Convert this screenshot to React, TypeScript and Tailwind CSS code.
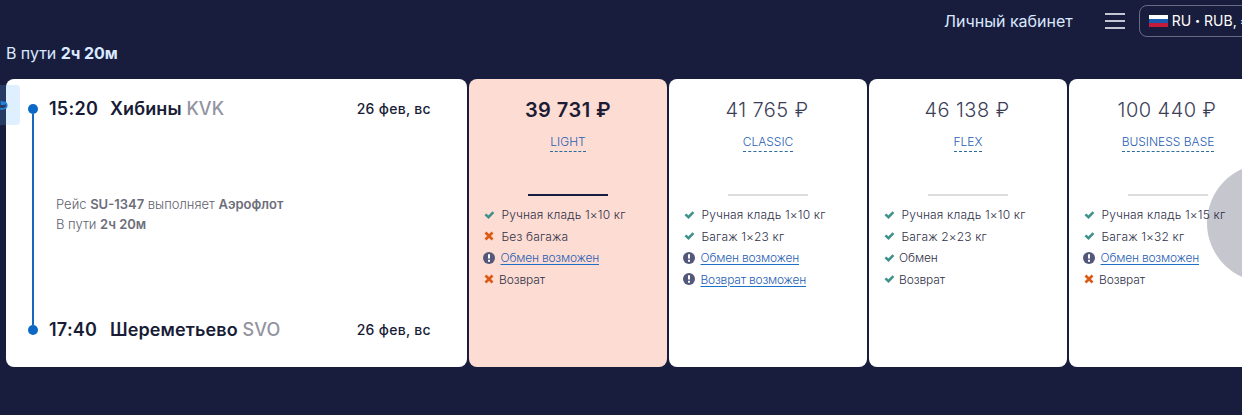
import React from "react";

type Mark = "yes" | "no" | "info";
type Feature = { mark: Mark; text: string; tight?: boolean };
type Fare = { price: string; name: string; selected?: boolean; features: Feature[] };

const fares: Fare[] = [
  {
    price: "39 731 ₽",
    name: "LIGHT",
    selected: true,
    features: [
      { mark: "yes", text: "Ручная кладь 1×10 кг" },
      { mark: "no", text: "Без багажа" },
      { mark: "info", text: "Обмен возможен" },
      { mark: "no", text: "Возврат", tight: true },
    ],
  },
  {
    price: "41 765 ₽",
    name: "CLASSIC",
    features: [
      { mark: "yes", text: "Ручная кладь 1×10 кг" },
      { mark: "yes", text: "Багаж 1×23 кг" },
      { mark: "info", text: "Обмен возможен" },
      { mark: "info", text: "Возврат возможен" },
    ],
  },
  {
    price: "46 138 ₽",
    name: "FLEX",
    features: [
      { mark: "yes", text: "Ручная кладь 1×10 кг" },
      { mark: "yes", text: "Багаж 2×23 кг" },
      { mark: "yes", text: "Обмен", tight: true },
      { mark: "yes", text: "Возврат", tight: true },
    ],
  },
  {
    price: "100 440 ₽",
    name: "BUSINESS BASE",
    features: [
      { mark: "yes", text: "Ручная кладь 1×15 кг" },
      { mark: "yes", text: "Багаж 1×32 кг" },
      { mark: "info", text: "Обмен возможен" },
      { mark: "no", text: "Возврат", tight: true },
    ],
  },
];

function MarkIcon({ mark }: { mark: Mark }) {
  if (mark === "info") {
    return (
      <svg className="h-3 w-3 shrink-0" viewBox="0 0 12 12">
        <circle cx="6" cy="6" r="6" fill="#53587a" />
        <path d="M6 2.2v4.4" stroke="#fff" strokeWidth="2" />
        <path d="M6 7.8v1.9" stroke="#fff" strokeWidth="2" />
      </svg>
    );
  }
  return (
    <svg className="h-3 w-3 shrink-0" viewBox="0 0 12 12" fill="none">
      {mark === "yes" ? (
        <path d="M2.4 5.3 5.5 8.2 10.4 3.2" stroke="#3d918a" strokeWidth="2.5" />
      ) : (
        <path d="M2.5 2.5 9.5 9.5M9.5 2.5 2.5 9.5" stroke="#dc5a14" strokeWidth="2.7" />
      )}
    </svg>
  );
}

function FareCard({ fare }: { fare: Fare }) {
  return (
    <section
      className={`flex h-72 w-[198px] shrink-0 flex-col items-center rounded-lg ${
        fare.selected ? "bg-[#fddcd3]" : "bg-white"
      }`}
    >
      <div
        className={`mt-[19px] h-6 whitespace-nowrap text-xl leading-6 tracking-[0.45px] ${
          fare.selected ? "font-semibold text-[#1b1b33]" : "-translate-x-px font-light text-[#3c3e58]"
        }`}
      >
        {fare.price}
      </div>
      <a className="mt-3 h-[18px] border-b border-dashed border-[#286d9c] text-xs font-light leading-4 text-[#2860b4]">
        {fare.name}
      </a>
      <div className={`mt-[42px] h-0.5 w-20 ${fare.selected ? "bg-[#181d40]" : "bg-[#dcdcde]"}`} />
      <ul className="mt-2 grid w-full grid-rows-[21px_22px_21px_22px] pl-3.5 text-xs font-light text-[#2f3148]">
        {fare.features.map((f) => (
          <li key={f.text} className="flex items-center whitespace-nowrap leading-[21px]">
            <MarkIcon mark={f.mark} />
            <span
              className={
                f.mark === "info"
                  ? "ml-[5.5px] tracking-[-0.2px] text-[#2860b4] underline decoration-[#1c70c8] decoration-1 underline-offset-2"
                  : f.tight
                    ? "ml-1 tracking-[-0.1px]"
                    : "ml-[6.5px] tracking-[0.16px]"
              }
            >
              {f.text}
            </span>
          </li>
        ))}
      </ul>
    </section>
  );
}

function Stop({ time, city, code }: { time: string; city: string; code: string }) {
  return (
    <div className="flex h-6 items-center">
      <span className="w-[61px] text-lg font-semibold leading-6 tracking-[0.25px]">{time}</span>
      <span className="flex-1 text-lg font-semibold leading-6 tracking-[0.12px]">
        {city} <span className="font-medium text-[#93939f]">{code}</span>
      </span>
      <span className="text-sm font-medium tracking-[0.3px]">26 фев, вс</span>
    </div>
  );
}

function FlightCard() {
  return (
    <section className="relative flex h-72 w-[461px] shrink-0 rounded-lg bg-white pt-[18px] pr-9 pb-[25px] pl-[22px] text-[#181c36]">
      <div className="absolute -left-1.5 top-1.5 flex h-10 w-5 items-center overflow-hidden rounded-r bg-[#58adff]/20">
        <svg className="h-3 w-2" viewBox="0 0 8 12" fill="none">
          <path d="M0 9.6C4 10.4 7 9 6.8 6.2 6.6 3.6 4 2.6 2 4M1.5 1.8v3.4h3.2" stroke="#2684d8" strokeWidth="1.7" />
        </svg>
      </div>
      <div className="flex w-2.5 flex-col items-center py-[7px]">
        <i className="h-2.5 w-2.5 rounded-full bg-[#0b68c5]" />
        <i className="w-0.5 flex-1 bg-[#1769bb]" />
        <i className="h-2.5 w-2.5 rounded-full bg-[#0b68c5]" />
      </div>
      <div className="ml-[11px] flex flex-1 flex-col justify-between">
        <Stop time="15:20" city="Хибины" code="KVK" />
        <div className="-mt-[11px] pl-[7px] text-[13px] font-light leading-5 text-[#60616f]">
          <p>
            Рейс <b className="font-semibold text-[#6d6e7b]">SU-1347</b> выполняет{" "}
            <b className="font-semibold text-[#6d6e7b]">Аэрофлот</b>
          </p>
          <p>
            В пути <b className="font-semibold text-[#6d6e7b]">2ч 20м</b>
          </p>
        </div>
        <Stop time="17:40" city="Шереметьево" code="SVO" />
      </div>
    </section>
  );
}

export default function App() {
  return (
    <main className="relative h-[415px] w-full overflow-hidden bg-[#191d3d] font-['Inter','Liberation_Sans',sans-serif]">
      <header className="flex h-[42px] items-center pl-[944px]">
        <a className="w-[129px] whitespace-nowrap text-base leading-6 text-[#d9e9ff]">Личный кабинет</a>
        <div className="ml-8 flex w-5 shrink-0 flex-col gap-[5px]">
          <i className="h-0.5 bg-[#c3c6d2]" />
          <i className="h-0.5 bg-[#c3c6d2]" />
          <i className="h-0.5 bg-[#c3c6d2]" />
        </div>
        <button className="ml-3.5 flex h-8 w-[130px] shrink-0 items-center whitespace-nowrap rounded-lg border border-[#686b82] pl-[9px] text-sm text-white">
          <svg className="mr-1 h-3 w-[19px]" viewBox="0 0 19 12">
            <path fill="#fff" d="M0 0h19v4H0z" />
            <path fill="#1b5bad" d="M0 4h19v4H0z" />
            <path fill="#c51b3b" d="M0 8h19v4H0z" />
          </svg>
          RU&nbsp;<span className="text-[9px]">•</span>&nbsp;RUB, ₽
        </button>
      </header>
      <div className="h-[37px] pl-1.5 text-base leading-[22px] tracking-[-0.05px] text-[#d9e9ff]">
        В пути <b className="font-bold">2ч 20м</b>
      </div>
      <div className="flex gap-0.5 pl-1.5">
        <FlightCard />
        {fares.map((f) => (
          <FareCard key={f.name} fare={f} />
        ))}
      </div>
      <div className="absolute left-[1207px] top-[164px] h-[118px] w-[118px] rounded-full bg-[#191d3d]/25" />
    </main>
  );
}
